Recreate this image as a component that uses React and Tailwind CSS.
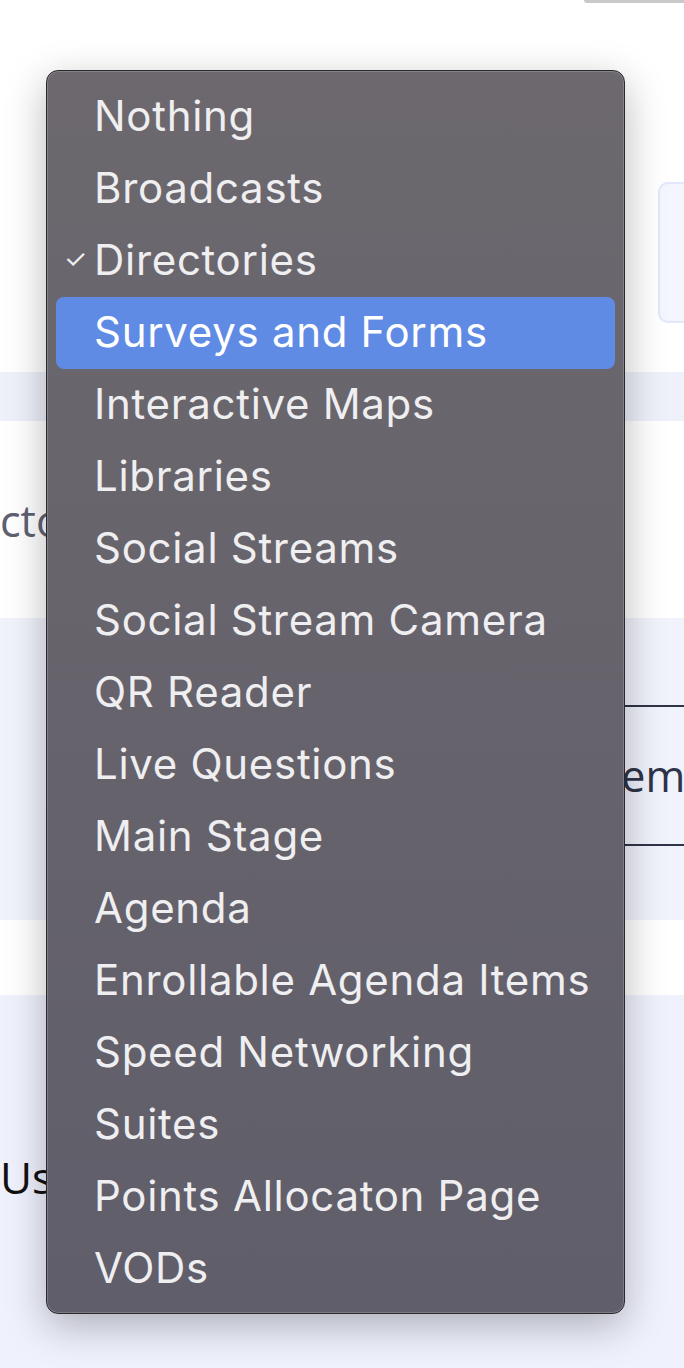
import React from "react";

const items = [
  "Nothing",
  "Broadcasts",
  "Directories",
  "Surveys and Forms",
  "Interactive Maps",
  "Libraries",
  "Social Streams",
  "Social Stream Camera",
  "QR Reader",
  "Live Questions",
  "Main Stage",
  "Agenda",
  "Enrollable Agenda Items",
  "Speed Networking",
  "Suites",
  "Points Allocaton Page",
  "VODs",
];

export default function App() {
  return (
    <div className="relative w-[684px] h-[1368px] overflow-hidden bg-white" style={{ fontFamily: '"Open Sans", "Noto Sans", sans-serif' }}>
      {/* background page */}
      <div className="flex flex-col">
        <div className="h-[372px] flex flex-col">
          <div className="flex justify-end">
            <div className="w-[100px] h-[3px] rounded-bl-full bg-[#c9c9c9]" />
          </div>
          <div className="flex justify-end mt-[179px]">
            <div className="w-[40px] h-[141px] -mr-[14px] rounded-[10px] border-2 border-[#e2e7fb] bg-[#f4f6fe]" />
          </div>
        </div>
        <div className="h-[49px] bg-[#eef0fa]" />
        <div className="h-[197px] flex items-center">
          <span className="text-[43px] leading-none text-[#5d6172] mt-[2px]">ctor</span>
        </div>
        <div className="h-[302px] bg-[#f0f2fc] flex flex-col justify-center">
          <div className="ml-auto w-[140px] h-[141px] mt-[12px] border-y-2 border-[#2f3448] flex items-center">
            <span className="pl-[62px] text-[43px] leading-none text-[#2f3448]">tem</span>
          </div>
        </div>
        <div className="h-[75px] bg-white" />
        <div className="h-[373px] bg-[#eff1fd] flex flex-col">
          <span className="mt-[160px] text-[44px] leading-none text-[#111]">User</span>
        </div>
      </div>

      {/* dropdown menu */}
      <div
        className="absolute left-[46px] top-[70px] w-[579px] h-[1244px] rounded-[12px] border border-[#2a282c] bg-gradient-to-b from-[#6c686e] to-[#605e6a] shadow-[0_12px_40px_rgba(0,0,0,0.28),inset_0_0_0_1px_rgba(255,255,255,0.18)] pt-[10px] px-[9px]"
        style={{ fontFamily: 'Inter, "Noto Sans", sans-serif' }}
      >
        {items.map((it) => {
          const active = it === "Surveys and Forms";
          const checked = it === "Directories";
          return (
            <div
              key={it}
              className={`relative h-[72px] flex items-center pl-[38px] rounded-[8px] text-[42px] tracking-[0.7px] ${
                active ? "bg-[#608be5] text-white" : "text-[#efeef0]"
              }`}
            >
              {checked && (
                <span className="absolute left-[8px] top-[14px] text-[26px] text-[#efeef0]">✓</span>
              )}
              <span className="-mt-[4px]">{it}</span>
            </div>
          );
        })}
      </div>
    </div>
  );
}
